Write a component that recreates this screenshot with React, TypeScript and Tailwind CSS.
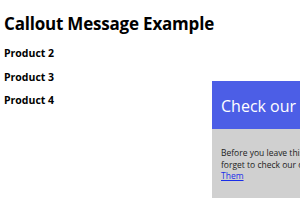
export default function App() {
  return (
    <div className="relative h-[210px] w-[300px] overflow-hidden bg-white font-['Open_Sans',sans-serif] text-black">
      <div className="px-[4px] pt-[12px]">
        <h1 className="text-[17px] font-bold leading-[24px] tracking-[-0.2px]">Callout Message Example</h1>
        <ul className="mt-[10px] flex flex-col gap-[9.5px] text-[10.5px] font-bold leading-[14px]">
          <li>Product 2</li>
          <li>Product 3</li>
          <li>Product 4</li>
        </ul>
      </div>

      <div className="absolute left-[212px] top-[81px] w-[170px]">
        <div className="flex h-[48px] items-center bg-[#4c5ee6] px-[9px] pt-[2px]">
          <h2 className="whitespace-nowrap text-[16px] leading-[22px] text-white">Check our offers</h2>
        </div>
        <div className="h-[69px] bg-[#d0d0d0] px-[9px] pt-[18px] text-[8.5px] leading-[11.5px] text-[#222]">
          <p className="whitespace-nowrap">
            Before you leave this page, don't
            <br />
            forget to check our offers.{" "}
            <a href="#" className="text-[#1a2ee8] underline">
              See
              <br />
              Them
            </a>
          </p>
        </div>
      </div>
    </div>
  );
}
